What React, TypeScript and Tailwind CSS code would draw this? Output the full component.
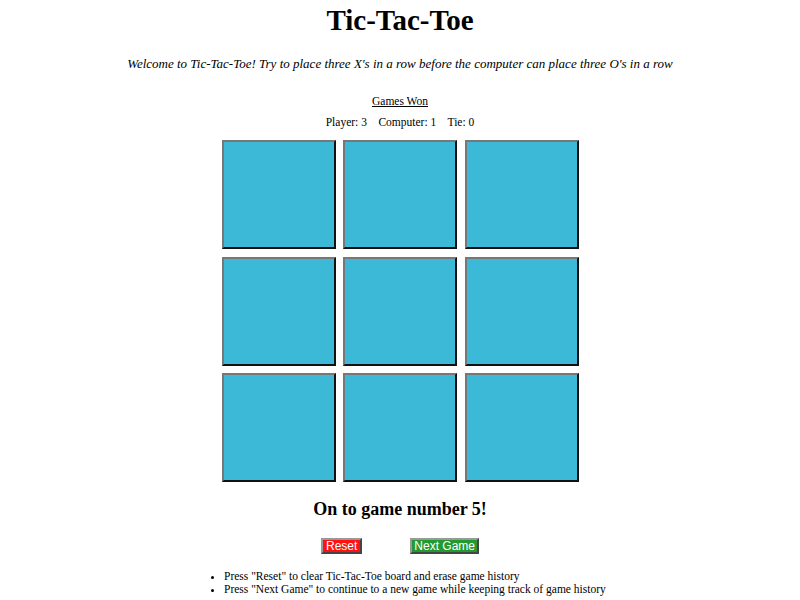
import React from "react";

export default function App() {
  const cells = Array.from({ length: 9 });
  return (
    <div className="w-[800px] h-[600px] bg-white text-black flex flex-col items-center" style={{ fontFamily: '"Liberation Serif", serif' }}>
      <h1 className="text-[29px] font-bold leading-[37px] mt-[2px]">Tic-Tac-Toe</h1>
      <p className="italic text-[13px] leading-[16px] mt-[17px]">
        Welcome to Tic-Tac-Toe! Try to place three X's in a row before the computer can place three O's in a row
      </p>
      <div className="underline text-[11.5px] leading-[15px] mt-[22px]">Games Won</div>
      <div className="text-[11.5px] leading-[15px] mt-[6px] whitespace-pre">Player: 3    Computer: 1    Tie: 0</div>
      <div className="grid grid-cols-[114px_114px_114px] gap-x-[7.5px] gap-y-[7.5px] mt-[10px]">
        {cells.map((_, i) => (
          <div
            key={i}
            className="h-[109px] bg-[#3bb9d6] border-2 border-t-[#777] border-l-[#777] border-r-[#111] border-b-[#111]"
          />
        ))}
      </div>
      <div className="text-[18px] font-bold leading-[23px] mt-[16px]">On to game number 5!</div>
      <div className="flex gap-[48px] mt-[17px]">
        <button
          className="bg-[#ff1111] text-white text-[12px] leading-[12px] px-[3px] h-[16px] border-2 border-t-[#999] border-l-[#999] border-r-[#444] border-b-[#444]"
          style={{ fontFamily: '"Liberation Sans", sans-serif' }}
        >
          Reset
        </button>
        <button
          className="bg-[#229a2f] text-white text-[12px] leading-[12px] px-[2px] h-[16px] border-2 border-t-[#999] border-l-[#999] border-r-[#444] border-b-[#444]"
          style={{ fontFamily: '"Liberation Sans", sans-serif' }}
        >
          Next Game
        </button>
      </div>
      <ul className="list-disc pl-[14px] text-[11.5px] leading-[13px] mt-[16px] self-start ml-[210px]">
        <li>Press "Reset" to clear Tic-Tac-Toe board and erase game history</li>
        <li>Press "Next Game" to continue to a new game while keeping track of game history</li>
      </ul>
    </div>
  );
}
